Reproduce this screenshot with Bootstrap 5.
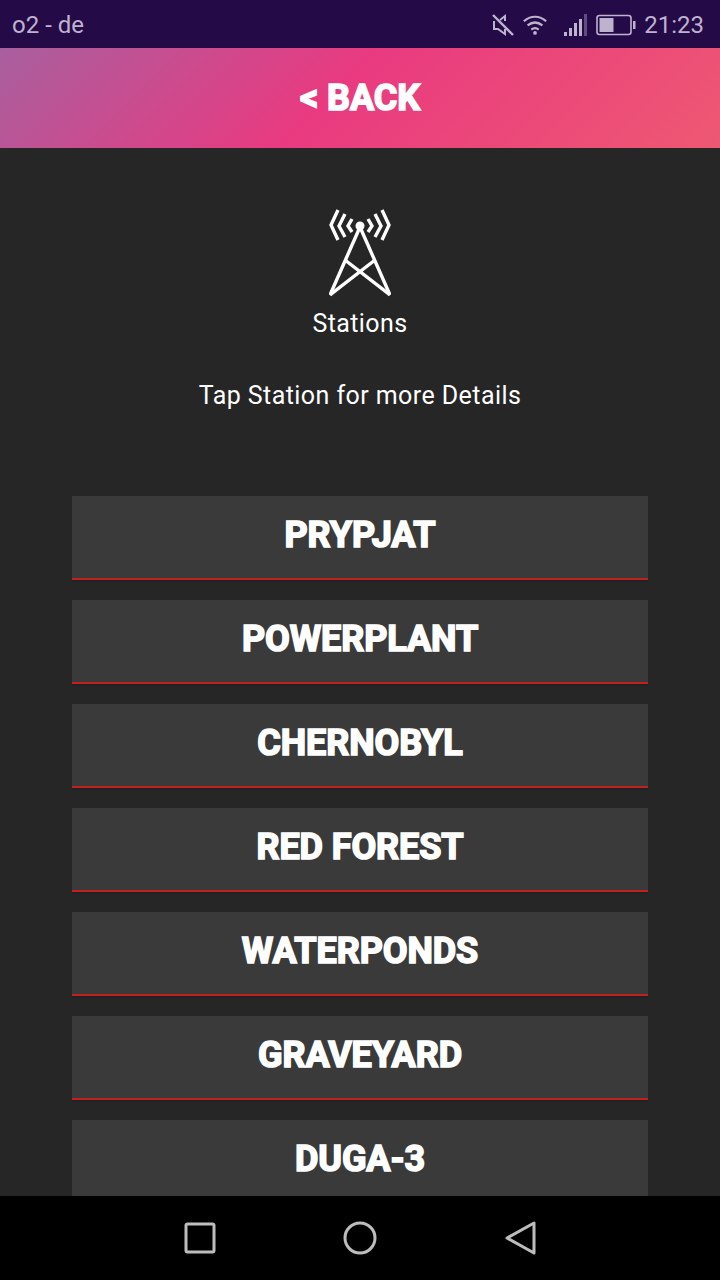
<!DOCTYPE html>
<html lang="en">
<head>
  <meta charset="UTF-8"/>
  <meta name="viewport" content="width=device-width,initial-scale=1.0"/>
  <title>Stations</title>
  <link href="https://cdn.jsdelivr.net/npm/bootstrap@5.3.0/dist/css/bootstrap.min.css" rel="stylesheet">
  <style>
    html, body { height: 100%; }
    body { background: #262626; font-family: Roboto, "Liberation Sans", sans-serif; color: #fff; overflow: hidden; }
    .phone-shell { width: 720px; height: 1280px; }
    .status-strip { height: 48px; background: #240a47; color: #bfb2cf; font-size: 24px; padding: 2px 16px 0 12px; }
    .status-clock { margin-left: 8px; }
    .back-head { height: 100px; background: linear-gradient(135deg, #a85f9e 0%, #e93a80 46%, #ee5872 100%); font-size: 36px; font-weight: 700; -webkit-text-stroke: 1.6px #fff; letter-spacing: -.1px; padding-bottom: 1px; }
    .station-pane { min-height: 0; overflow: hidden; padding-top: 61px; }
    .station-name { font-size: 25px; line-height: 28px; margin-top: 13px; letter-spacing: .4px; }
    .station-hint { font-size: 25px; line-height: 28px; margin-top: 44px; margin-bottom: 86px; letter-spacing: .43px; }
    .station-list { margin: 0 72px; gap: 20px; }
    .station-btn { height: 84px; background: #3a3a3a; border: 0; border-bottom: 2px solid #c0211c; box-shadow: 0 2px 0 #232327; color: #fff; font-size: 36px; font-weight: 700; -webkit-text-stroke: 1.6px #fff; letter-spacing: -.1px; padding: 0 0 4px; border-radius: 0; }
    .soft-keys { height: 84px; background: #000; gap: 104px; }
    .mute-icon { margin-right: -1px; }
  </style>
</head>
<body>
<div class="phone-shell d-flex flex-column">
  <div class="status-strip d-flex align-items-center flex-shrink-0">
    <span class="flex-grow-1">o2 - de</span>
    <svg class="mute-icon" width="24" height="24" viewBox="0 0 24 24" fill="none" stroke="#bfb2cf" stroke-width="2"><path d="M3 8v8h4l7 5V16M14 8V3L9 7"/><path d="M2 2l20 20" stroke-width="2.4"/></svg>
    <svg class="ms-2" width="26" height="24" viewBox="0 0 28 24" fill="none" stroke="#bfb2cf" stroke-width="2.4"><path d="M2 8c7-6.500 17-6.500 24 0M6 12.500c5-4 11-4 16 0M10 17c2.500-2 5.500-2 8 0"/><circle cx="14" cy="20.500" r="2" fill="#bfb2cf" stroke="none"/></svg>
    <svg class="ms-3" width="24" height="24" viewBox="0 0 24 24" fill="#bfb2cf"><rect x="0" y="19" width="3" height="4"/><rect x="5" y="15" width="3" height="8"/><rect x="10" y="10" width="3" height="13"/><rect x="15" y="6" width="3" height="17"/><rect x="20" y="1" width="3" height="22" opacity=".4"/></svg>
    <svg class="ms-2" width="40" height="24" viewBox="0 0 40 24" fill="none"><rect x="1" y="2.500" width="34" height="19" rx="2.500" stroke="#bfb2cf" stroke-width="1.600"/><rect x="3.500" y="5" width="14" height="14" fill="#bfb2cf"/><rect x="37" y="8" width="2.500" height="8" fill="#bfb2cf"/></svg>
    <span class="status-clock">21:23</span>
  </div>

  <div class="back-head d-flex align-items-center justify-content-center flex-shrink-0">&lt; BACK</div>

  <div class="station-pane flex-grow-1 d-flex flex-column text-center">
    <svg class="align-self-center flex-shrink-0" width="62" height="88" viewBox="0 0 62 88" fill="none" stroke="#fff" stroke-width="3.400">
      <circle cx="31" cy="17" r="4.500" fill="#fff" stroke="none"/>
      <path d="M1 86L31 18 61 86"/>
      <path d="M16 51L61 86M46 51L1 86"/>
      <path d="M9 1L2 16l7 15M16 5L10 17l6 11M23 10l-4 7 4 6M53 1l7 15-7 15M46 5l6 12-6 11M39 10l4 7-4 6"/>
    </svg>
    <div class="station-name flex-shrink-0">Stations</div>
    <div class="station-hint flex-shrink-0">Tap Station for more Details</div>
    <div class="station-list d-flex flex-column flex-shrink-0">
      <button class="station-btn btn flex-shrink-0">PRYPJAT</button>
      <button class="station-btn btn flex-shrink-0">POWERPLANT</button>
      <button class="station-btn btn flex-shrink-0">CHERNOBYL</button>
      <button class="station-btn btn flex-shrink-0">RED FOREST</button>
      <button class="station-btn btn flex-shrink-0">WATERPONDS</button>
      <button class="station-btn btn flex-shrink-0">GRAVEYARD</button>
      <button class="station-btn btn flex-shrink-0">DUGA-3</button>
    </div>
  </div>

  <div class="soft-keys d-flex align-items-center justify-content-center flex-shrink-0">
    <svg width="56" height="36" viewBox="0 0 56 36" fill="none" stroke="#bdbdbd" stroke-width="3" stroke-linejoin="round"><rect x="14" y="4" width="28" height="28" rx="1.500"/></svg>
    <svg width="56" height="36" viewBox="0 0 56 36" fill="none" stroke="#bdbdbd" stroke-width="3"><circle cx="28" cy="18" r="15"/></svg>
    <svg width="56" height="36" viewBox="0 0 56 36" fill="none" stroke="#bdbdbd" stroke-width="3" stroke-linejoin="round"><path d="M42 3v30L15 18z"/></svg>
  </div>
</div>
<script src="https://cdn.jsdelivr.net/npm/bootstrap@5.3.0/dist/js/bootstrap.bundle.min.js"></script>
</body>
</html>
